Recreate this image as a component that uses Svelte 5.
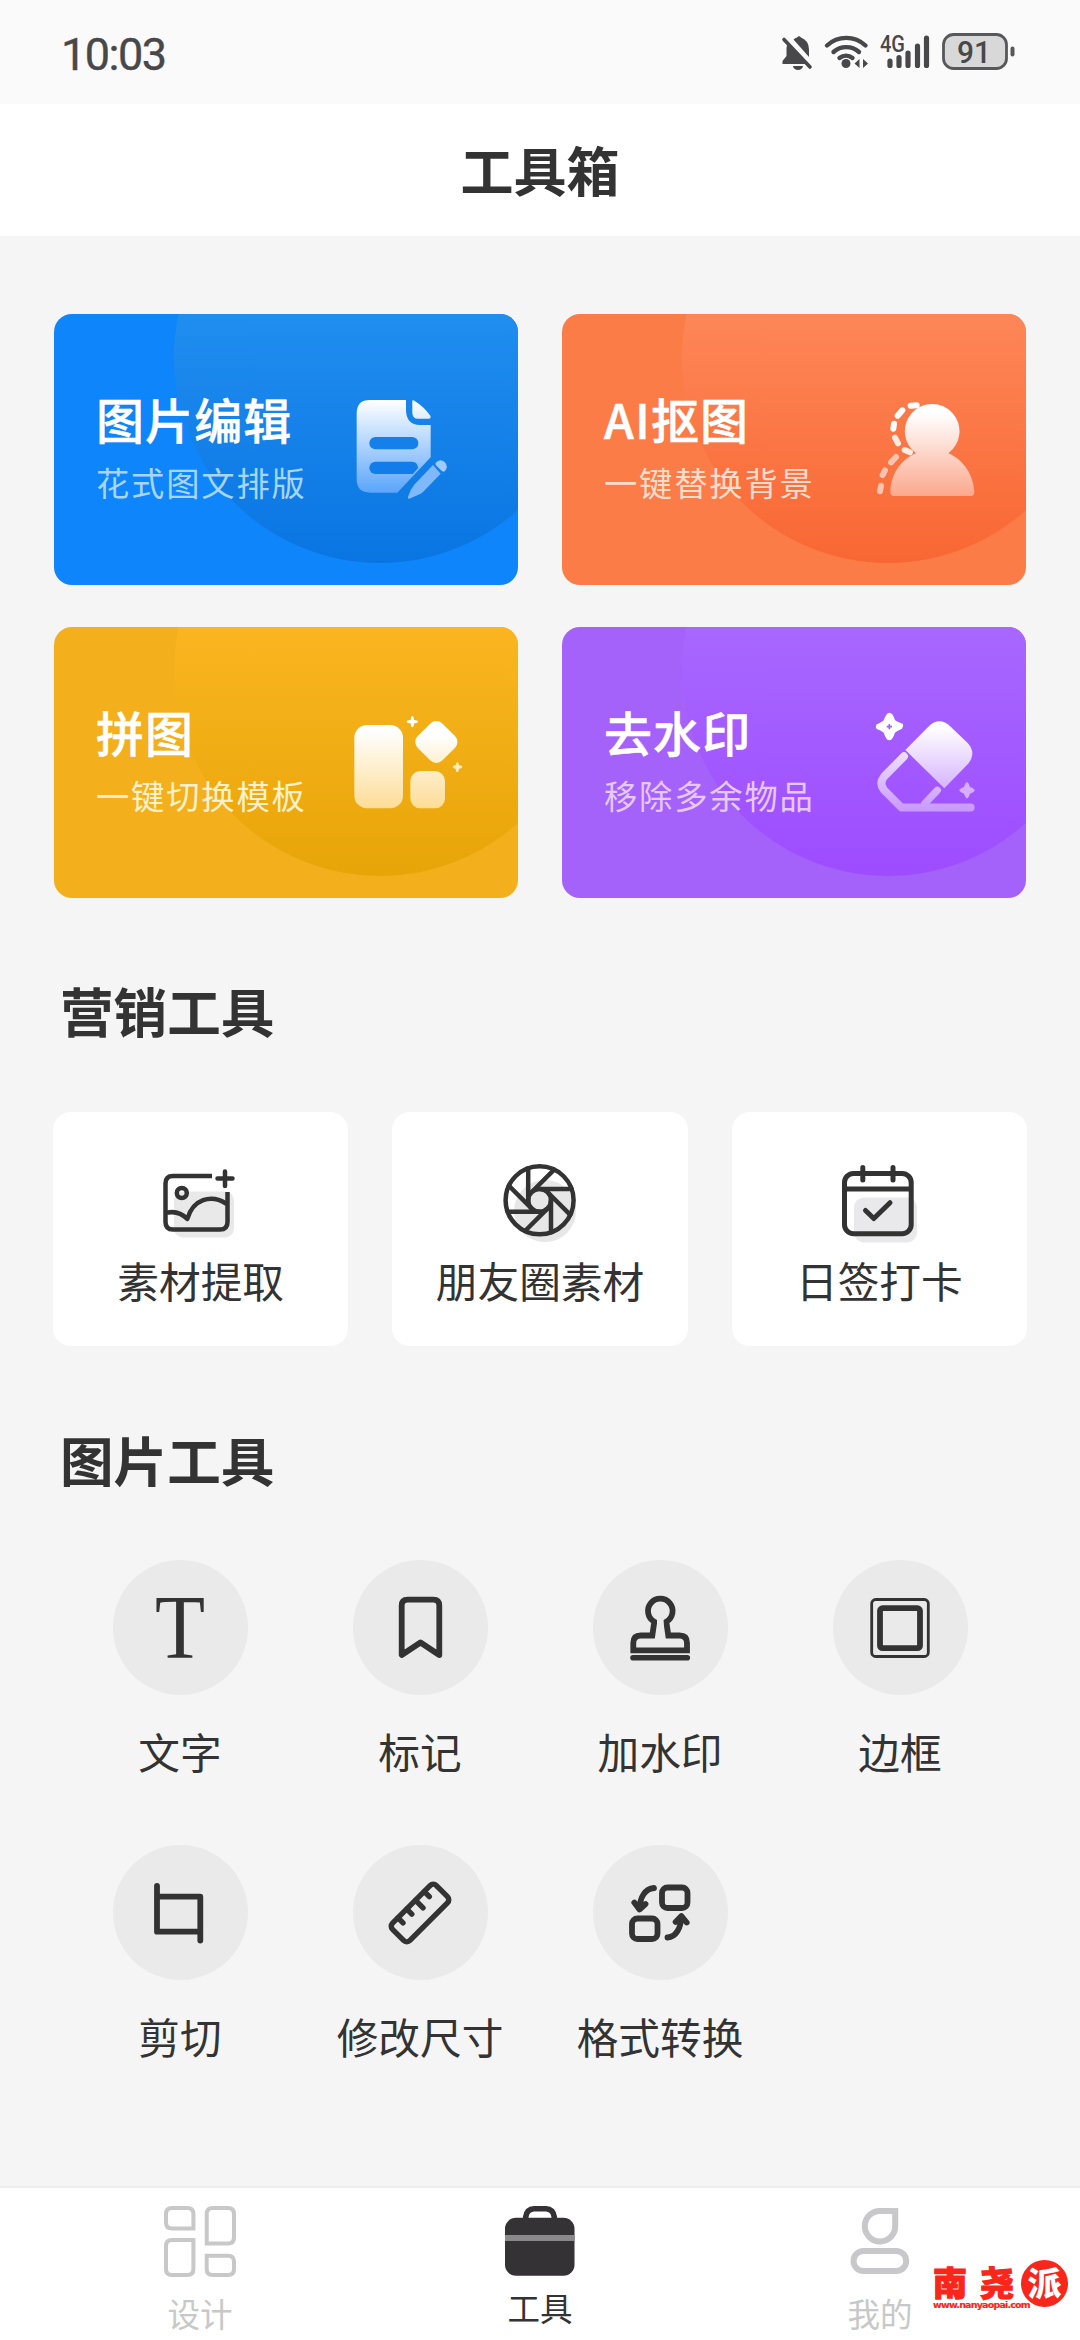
<script>
  const features = [
    { id: 'edit', title: '图片编辑', sub: '花式图文排版', view: '924 282 390 330' },
    { id: 'cutout', title: 'AI抠图', sub: '一键替换背景', view: '948 282 390 330' },
    { id: 'collage', title: '拼图', sub: '一键切换模板', view: '924 291 390 330' },
    { id: 'erase', title: '去水印', sub: '移除多余物品', view: '948 291 390 330' }
  ];
  const marketing = [
    { id: 'extract', label: '素材提取', view: '155 1158 92 92' },
    { id: 'moments', label: '朋友圈素材', view: '494 1158 92 92' },
    { id: 'daily', label: '日签打卡', view: '833.5 1158 92 92' }
  ];
  const tools = [
    { id: 'text', label: '文字' },
    { id: 'bookmark', label: '标记' },
    { id: 'stamp', label: '加水印' },
    { id: 'frame', label: '边框' },
    { id: 'crop', label: '剪切' },
    { id: 'ruler', label: '修改尺寸' },
    { id: 'convert', label: '格式转换' }
  ];
  const blades = [0, 45, 90, 135, 180, 225, 270, 315];
</script>

<div class="screen">
  <header class="status">
    <span class="time">10:03</span>
    <svg class="indicators" viewBox="776 28 244 48">
      <g fill="#48484a">
        <path d="M797 37.500q2-2.500 4 0q8 3 8 12v7.500L793.500 39.500q1.500-1.500 3.500-2z" />
        <path d="M788 43L806.500 64H782.500v-3l4-5v-8q0-3 1.500-5z" />
        <path d="M793 66h10a5 4 0 0 1-10 0z" />
      </g>
      <path d="M784 39.500L810 67" stroke="#48484a" stroke-width="3.600" stroke-linecap="round" />
      <g fill="none" stroke="#48484a" stroke-width="4.400" stroke-linecap="round">
        <path d="M827 45.500a28 28 0 0 1 38.500 0" />
        <path d="M833.500 52a19 19 0 0 1 25.500 0" />
        <path d="M839.500 58a10.500 10.500 0 0 1 13 0" />
      </g>
      <circle cx="846" cy="63.500" r="4.500" fill="#48484a" />
      <path d="M859.500 59v9l-5-4.500zM863 59v9l5-4.500z" fill="#48484a" />
      <text x="880" y="51.500" class="net" textLength="25" lengthAdjust="spacingAndGlyphs">4G</text>
      <g stroke="#48484a" stroke-width="5.200" stroke-linecap="round">
        <path d="M890 61v4.500M899 57.500v8M908 53v12.500M917.500 46v19.500M926.500 38v27.500" />
      </g>
      <rect x="943.500" y="34.500" width="63" height="34" rx="10" fill="#d8d8d8" stroke="#58585a" stroke-width="2.800" />
      <text x="957" y="62.500" class="level" textLength="34" lengthAdjust="spacingAndGlyphs">91</text>
      <path d="M1012.500 48.500v6" stroke="#58585a" stroke-width="4" stroke-linecap="round" />
    </svg>
  </header>

  <div class="titlebar"><h1>工具箱</h1></div>

  <main>
    <section class="features">
      {#each features as f (f.id)}
        <article class="feature {f.id}">
          <div class="copy">
            <h2>{f.title}</h2>
            <p>{f.sub}</p>
          </div>
          <svg class="art" viewBox={f.view}>
            {#if f.id === 'edit'}
              <defs>
                <linearGradient id="g-edit" gradientUnits="userSpaceOnUse" x1="0" y1="300" x2="0" y2="597">
                  <stop offset="0" stop-color="#fff" /><stop offset="1" stop-color="#4f9ffb" />
                </linearGradient>
              </defs>
              <g fill="url(#g-edit)">
                <path d="M990 300H1098V328Q1098 375 1140 375H1172V472L1072 578H990Q950 578 950 538V340Q950 300 990 300Z" />
                <path d="M1117 304Q1117 299 1123 302Q1152 320 1171 347Q1174 356 1166 356H1135Q1117 356 1117 338Z" />
              </g>
              <path d="M1006.500 411H1116.500a18.500 18.500 0 0 1 0 37H1006.500a18.500 18.500 0 0 1 0-37z" fill="#1680ea" />
              <path d="M1006.500 485H1116.500q15 0 18 19l-16 18H1006.500a18.500 18.500 0 0 1 0-37z" fill="#127de8" />
              <path d="M1179 495L1202 521L1149 576Q1142 583 1108 596Q1102 597 1104 590Q1112 567 1124 553Z" fill="#7fb9fb" />
              <path d="M1187 488Q1200 474 1214 486Q1227 500 1214 514Q1209 518 1203 511L1190 498Q1184 492 1187 488Z" fill="#9fcbfc" />
            {:else if f.id === 'cutout'}
              <defs>
                <linearGradient id="g-cut" gradientUnits="userSpaceOnUse" x1="0" y1="340" x2="0" y2="600">
                  <stop offset="0" stop-color="#fff" /><stop offset="1" stop-color="#fba488" />
                </linearGradient>
              </defs>
              <path fill="url(#g-cut)" d="M1128 460A82 82 0 1 1 1225 460C1272 480 1300 525 1303 575Q1303 588 1292 588H1062Q1051 588 1051 575C1052 525 1080 480 1128 460Z" />
              <g fill="none" stroke-width="18" stroke-linecap="round">
                <path stroke="#fff" d="M1112 317L1130 316M1087 331L1073 347M1062 371L1060 386" />
                <path stroke="#ffe9e1" d="M1065 413L1074 430M1094 450L1110 457" />
                <path stroke="#fdc3ae" d="M1068 471L1053 487M1035 511L1028 525M1023 557L1020 574" />
              </g>
            {:else if f.id === 'collage'}
              <defs>
                <linearGradient id="g-col" gradientUnits="userSpaceOnUse" x1="0" y1="360" x2="0" y2="600">
                  <stop offset="0" stop-color="#fff" /><stop offset="1" stop-color="#fddc94" />
                </linearGradient>
                <linearGradient id="g-dia" gradientUnits="userSpaceOnUse" x1="1152" y1="359" x2="1226" y2="433">
                  <stop offset="0.300" stop-color="#fff" /><stop offset="1" stop-color="#fff3d6" />
                </linearGradient>
              </defs>
              <rect x="943" y="345" width="146" height="250" rx="38" fill="url(#g-col)" />
              <rect x="1111" y="483" width="104" height="112" rx="30" fill="url(#g-col)" />
              <rect x="1137" y="344" width="104" height="104" rx="25" transform="rotate(45 1189 396)" fill="url(#g-dia)" />
              <path d="M1117 318q4 0 5 12q12 1 12 5t-12 5q-1 12-5 12t-5-12q-12-1-12-5t12-5q1-12 5-12z" fill="#fff" />
              <path d="M1252 457q4 0 5 9q10 1 10 5t-10 5q-1 10-5 10t-5-10q-9-1-9-5t9-5q1-9 5-9z" fill="#fdebc0" />
            {:else}
              <defs>
                <linearGradient id="g-era" gradientUnits="userSpaceOnUse" x1="0" y1="350" x2="0" y2="610">
                  <stop offset="0" stop-color="#fff" /><stop offset="1" stop-color="#c795ff" />
                </linearGradient>
              </defs>
              <path d="M1048 308Q1058 308 1065 330Q1069 334 1089 342Q1091 350 1086 356Q1069 363 1065 368Q1057 391 1048 391T1031 368Q1027 364 1010 357Q1005 350 1010 343Q1027 336 1031 331Q1039 308 1048 308Z" fill="#fff" />
              <path d="M1048 342v16M1040 350h16" stroke="#a55ffb" stroke-width="5" />
              <path d="M1096 420L1165 350Q1198 318 1232 350L1283 399Q1311 430 1283 463L1213 535Z" fill="url(#g-era)" />
              <g fill="none" stroke="url(#g-era)" stroke-linecap="round" stroke-linejoin="round">
                <path stroke-width="24" d="M1092 439L1032 500Q1016 520 1032 540L1084 592.500H1292" />
                <path stroke-width="22" d="M1192 541L1154 581" />
              </g>
              <path d="M1281 517q5 0 9 14q14 5 14 10t-14 10q-5 14-9 14t-9-14q-14-5-14-10t14-10q4-14 9-14z" fill="#d6adff" />
            {/if}
          </svg>
        </article>
      {/each}
    </section>

    <h3>营销工具</h3>
    <section class="marketing">
      {#each marketing as m (m.id)}
        <article class="tile">
          <svg viewBox={m.view} fill="none" stroke="#333" stroke-width="5" stroke-linecap="round" stroke-linejoin="round">
            {#if m.id === 'extract'}
              <rect x="174" y="1191.500" width="60" height="46" rx="9" fill="#e9e9e9" stroke="none" />
              <g stroke-width="4.500">
                <path stroke-linecap="butt" d="M212 1176H173Q165.500 1176 165.500 1183.500V1222Q165.500 1229.500 173 1229.500H220Q227.500 1229.500 227.500 1222V1192" />
                <path d="M217.500 1178.500H232.500M225 1171.500V1186" />
                <circle cx="181.800" cy="1193" r="5" />
                <path d="M168 1212.500Q179 1210.500 187.300 1219C193 1199 211 1194 226 1203.500" />
              </g>
            {:else if m.id === 'moments'}
              <circle cx="545" cy="1211" r="31" fill="#e8e7e8" stroke="none" />
              <g stroke-width="4.500">
                <circle cx="539.600" cy="1200.300" r="34" />
                <circle cx="539.600" cy="1200.300" r="11.400" />
                {#each blades as a}
                  <path transform="translate(539.600 1200.300) rotate({a})" d="M-11.400-32V0" />
                {/each}
              </g>
            {:else}
              <rect x="854.500" y="1197.500" width="63" height="45" rx="10" fill="#e9e8ea" stroke="none" />
              <rect x="845" y="1173.500" width="66.700" height="60.200" rx="9" />
              <path d="M846 1189H911M863.300 1167.500V1180M893.500 1167.500V1180M866 1210.500L874.300 1218.500L890.500 1202.700" />
            {/if}
          </svg>
          <span>{m.label}</span>
        </article>
      {/each}
    </section>

    <h3 class="second">图片工具</h3>
    <section class="tools">
      {#each tools as t (t.id)}
        <article class="tool">
          <div class="disc">
            <svg viewBox="-40 -40 80 80" fill="none" stroke="#333" stroke-width="5.800" stroke-linecap="round" stroke-linejoin="round">
              {#if t.id === 'text'}
                <text class="serif" transform="scale(.9 1)" x="0" y="30" text-anchor="middle">T</text>
              {:else if t.id === 'bookmark'}
                <path d="M-18.300 27V-22.300Q-18.300-28.300-12.300-28.300H13.300Q19.300-28.300 19.300-22.300V27L.5 14.500Z" />
              {:else if t.id === 'stamp'}
                <path stroke-linejoin="miter" d="M-5.700-6.300A12.300 12.300 0 1 1 6.300-6.300L8.300 7.500H19.500Q27 7.500 27 15V22.300H-26.700V15Q-26.700 7.500-19.200 7.500H-7.700Z" />
                <path d="M-3-5H3.500" stroke="#eaeaea" stroke-width="7" stroke-linecap="butt" />
                <path d="M-27 29.700H27.300" stroke-width="5.600" />
              {:else if t.id === 'frame'}
                <rect x="-28.300" y="-28.500" width="56.600" height="57" rx="4" stroke-width="2.800" />
                <rect x="-20" y="-19.800" width="40" height="40" rx="2.500" />
              {:else if t.id === 'crop'}
                <path d="M-23-27V18.700H20.300M-23-16.300H20.300V27.500" />
              {:else if t.id === 'ruler'}
                <g transform="rotate(-45)" stroke-width="5.400">
                  <rect x="-31" y="-12.300" width="62" height="24.600" rx="4.500" />
                  <path d="M-19-12V-5M-6.600-12V-5M5.800-12V-1.500M18.200-12V-5" />
                </g>
              {:else}
                <rect x="2" y="-25.500" width="25.500" height="20.500" rx="5.500" />
                <rect x="-28" y="5.500" width="25.500" height="20.500" rx="5.500" />
                <path d="M-6-25C-15-24-20-16-20.500-4M-25.700-10.500L-20.500-3.500L-14.500-9M7.500 24.500C16 24 21 15 21.400 3.500M15.600 9L21.400 3L26.700 9.500" />
              {/if}
            </svg>
          </div>
          <span>{t.label}</span>
        </article>
      {/each}
    </section>
  </main>

  <nav>
    <div class="tab">
      <svg viewBox="160 2201 80 80" fill="none" stroke="#c8c8c8" stroke-width="4">
        <path d="M172 2208H187.400Q193.400 2208 193.400 2214V2228.500H172Q166 2228.500 166 2222.500V2214Q166 2208 172 2208Z" />
        <path d="M212.700 2208H228Q234 2208 234 2214V2237.500Q234 2243.500 228 2243.500H206.700V2214Q206.700 2208 212.700 2208Z" />
        <path d="M172 2240H193.400V2269Q193.400 2275 187.400 2275H172Q166 2275 166 2269V2246Q166 2240 172 2240Z" />
        <path d="M206.700 2255.700H228Q234 2255.700 234 2261.700V2269Q234 2275 228 2275H212.700Q206.700 2275 206.700 2269Z" />
      </svg>
      <span>设计</span>
    </div>
    <div class="tab active">
      <svg viewBox="500 2201 80 80">
        <path d="M525.700 2220V2217Q527 2209 534 2208.800H546Q553 2209 554.300 2217V2220" fill="none" stroke="#343235" stroke-width="5.600" />
        <rect x="505" y="2217.700" width="69.500" height="58" rx="11" fill="#343235" />
        <rect x="505" y="2235" width="69.500" height="6" fill="#8a888b" />
      </svg>
      <span>工具</span>
    </div>
    <div class="tab">
      <svg viewBox="839.500 2201 80 80" fill="none" stroke="#c8c7ca" stroke-width="6">
        <path d="M879.500 2211H894.700V2226A15.200 15.200 0 1 1 879.500 2211Z" />
        <rect x="853" y="2251" width="52.700" height="20" rx="10" />
      </svg>
      <span>我的</span>
    </div>
  </nav>

  <div class="brand">
    <div class="names">
      <div class="chars"><b>南</b><b>尧</b></div>
      <small>www.nanyaopai.com</small>
    </div>
    <i>派</i>
  </div>
</div>

<style>
  :global(body) {
    background: #f5f5f5;
  }
  .screen {
    position: relative;
    width: 1080px;
    height: 2340px;
    display: flex;
    flex-direction: column;
    overflow: hidden;
    background: #f5f5f6;
    color: #333;
    font-family: 'Noto Sans CJK SC', sans-serif;
  }
  h1, h2, h3, p { margin: 0; }
  svg { display: block; }

  .status {
    flex: none;
    height: 104px;
    box-sizing: border-box;
    padding: 28px 60px 28px 61px;
    display: flex;
    justify-content: space-between;
    background: #fafafa;
  }
  .time {
    font: 400 45px/53px Roboto, sans-serif;
    letter-spacing: -1.500px;
    color: #48484a;
    -webkit-text-stroke: 0.400px #48484a;
  }
  .indicators { width: 244px; height: 48px; }
  .net { font: 500 23px Roboto, sans-serif; fill: #48484a; }
  .level { font: 500 32px Roboto, sans-serif; fill: #48484a; }

  .titlebar {
    flex: none;
    height: 132px;
    display: flex;
    justify-content: center;
    background: #fff;
  }
  h1 { font-size: 53px; line-height: 130px; font-weight: 700; }

  main { flex: 1; }
  .features {
    display: grid;
    grid-template-columns: 464px 464px;
    gap: 42px 44px;
    padding: 78px 54px 0;
  }
  .feature {
    position: relative;
    isolation: isolate;
    display: flex;
    height: 271px;
    box-sizing: border-box;
    padding-left: 42px;
    border-radius: 18px;
    overflow: hidden;
    color: #fff;
  }
  .feature::before {
    content: '';
    position: absolute;
    z-index: -1;
    left: 120px;
    top: -163px;
    width: 412px;
    height: 412px;
    border-radius: 50%;
    background: linear-gradient(var(--top) 40%, var(--end));
  }
  .edit { background: #0f85fc; --top: #208df0; --end: #0975e2; --sub: #a6d5fe; }
  .cutout { background: #fb7c47; --top: #fe8657; --end: #f86733; --sub: #fddccb; }
  .collage { background: #f3b01c; --top: #fab520; --end: #e8a508; --sub: #fdf1cb; }
  .erase { background: #a462fa; --top: #a867ff; --end: #9d4cff; --sub: #e6c8fd; }
  .copy { width: 252px; padding-top: 74px; white-space: nowrap; }
  h2 {
    font-size: 48px;
    line-height: 60px;
    font-weight: 500;
    letter-spacing: 1.100px;
    -webkit-text-stroke: 0.500px #fff;
  }
  .copy p {
    margin-top: 9px;
    font-size: 33.300px;
    line-height: 50px;
    letter-spacing: 1.800px;
    color: var(--sub);
  }
  .art { width: 130px; height: 110px; margin-top: 80px; }

  h3 {
    margin: 72px 0 0 60px;
    font-size: 53.600px;
    line-height: 80px;
    font-weight: 700;
  }
  h3.second { margin-top: 73px; }
  .marketing {
    display: grid;
    grid-template-columns: repeat(3, 1fr);
    gap: 44px;
    padding: 0 53px;
    margin-top: 62px;
  }
  .tile {
    height: 234px;
    box-sizing: border-box;
    padding-top: 46px;
    display: flex;
    flex-direction: column;
    align-items: center;
    border-radius: 18px;
    background: #fff;
  }
  .tile svg { width: 92px; height: 92px; }
  .tile span { font-size: 41.700px; line-height: 60px; }

  .tools {
    display: grid;
    grid-template-columns: repeat(4, 240px);
    grid-auto-rows: 285px;
    padding: 0 60px;
    margin-top: 61px;
  }
  .tool { display: flex; flex-direction: column; align-items: center; }
  .disc {
    width: 135px;
    height: 135px;
    display: flex;
    align-items: center;
    justify-content: center;
    border-radius: 50%;
    background: #eaeaea;
  }
  .disc svg { width: 80px; height: 80px; overflow: visible; }
  .serif { font: 91px 'Liberation Serif', serif; fill: #333; stroke: none; }
  .tool span { margin-top: 26px; font-size: 41.700px; line-height: 60px; white-space: nowrap; }

  nav {
    flex: none;
    height: 154px;
    box-sizing: border-box;
    padding: 13px 30px 0;
    display: flex;
    border-top: 2px solid #ececec;
    background: #fff;
  }
  .tab { flex: 1; display: flex; flex-direction: column; align-items: center; color: #c8c8c8; }
  .tab svg { width: 80px; height: 80px; }
  .tab span { margin-top: 8px; font-size: 32.500px; line-height: 48px; }
  .tab.active { color: #333; }
  .tab.active span { margin-top: 2px; }

  .brand {
    position: absolute;
    left: 933px;
    top: 2260px;
    display: flex;
    color: #f8261b;
  }
  .names { width: 88px; padding-top: 4px; }
  .chars { display: flex; gap: 13px; }
  .chars b { font-size: 34px; line-height: 35px; font-weight: 900; -webkit-text-stroke: 1.200px #f8261b; }
  .names small {
    display: block;
    margin-top: 1px;
    font: 700 9.500px/10px 'DejaVu Sans', sans-serif;
    letter-spacing: -0.800px;
    -webkit-text-stroke: 0.200px #f8261b;
    white-space: nowrap;
  }
  .brand i {
    width: 47px;
    height: 47px;
    border-radius: 50%;
    background: #f8261b;
    color: #fff;
    font: 900 34px/44px 'Noto Sans CJK SC', sans-serif;
    text-align: center;
  }
</style>
